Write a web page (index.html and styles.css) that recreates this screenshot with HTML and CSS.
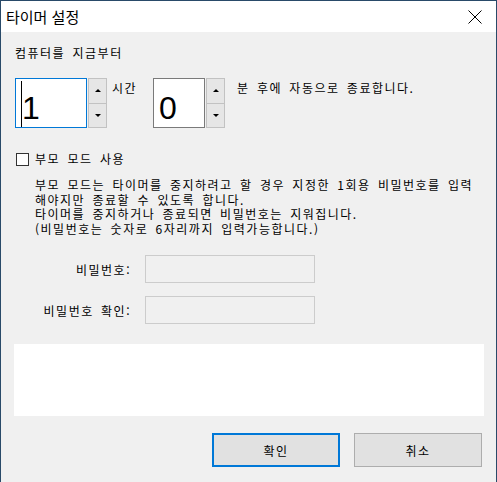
FILE: index.html
```html
<!DOCTYPE html>
<html lang="ko">
<head>
  <meta charset="UTF-8">
  <meta name="viewport" content="width=device-width, initial-scale=1.0">
  <title>타이머 설정</title>
  <link rel="stylesheet" href="styles.css">
</head>
<body>

  <div class="window">
    <div class="titlebar">
      <span class="title">타이머 설정</span>
      <span class="close">
        <svg width="14" height="14" viewBox="0 0 14 14">
          <path d="M0.5 0.5 L13.5 13.5 M13.5 0.5 L0.5 13.5" stroke="#000" stroke-width="1" fill="none"/>
        </svg>
      </span>
    </div>

    <div class="body">
      <div class="lead">컴퓨터를 지금부터</div>

      <div class="timer-row">
        <div class="num-box focused">
          <span class="caret"></span>
          <span class="num">1</span>
        </div>
        <div class="spin">
          <div class="spin-btn"><span class="arrow up"></span></div>
          <div class="spin-btn"><span class="arrow down"></span></div>
        </div>
        <span class="unit">시간</span>
        <div class="num-box minutes">
          <span class="num">0</span>
        </div>
        <div class="spin">
          <div class="spin-btn"><span class="arrow up"></span></div>
          <div class="spin-btn"><span class="arrow down"></span></div>
        </div>
        <span class="tail">분 후에 자동으로 종료합니다.</span>
      </div>

      <label class="check-row">
        <span class="checkbox"></span>
        부모 모드 사용
      </label>

      <p class="note">
        부모 모드는 타이머를 중지하려고 할 경우 지정한 1회용 비밀번호를 입력<br>
        해야지만 종료할 수 있도록 합니다.<br>
        타이머를 중지하거나 종료되면 비밀번호는 지워집니다.<br>
        (비밀번호는 숫자로 6자리까지 입력가능합니다.)
      </p>

      <div class="pw-row">
        <span class="pw-label">비밀번호:</span>
        <span class="pw-input"></span>
      </div>
      <div class="pw-row second">
        <span class="pw-label">비밀번호 확인:</span>
        <span class="pw-input"></span>
      </div>

      <div class="panel"></div>

      <div class="buttons">
        <button class="btn default">확인</button>
        <button class="btn">취소</button>
      </div>
    </div>
  </div>

</body>
</html>
```

FILE: styles.css
```css
* {
  margin: 0;
  padding: 0;
  box-sizing: border-box;
}

body {
  font-family: "Noto Sans CJK KR", "Noto Sans", sans-serif;
  font-size: 12px;
  letter-spacing: 1.5px;
  word-spacing: 2.5px;
  color: #000;
  background: #f0f0f0;
}

.window {
  width: 497px;
  height: 482px;
  border: 1px solid #294a69;
  border-bottom: none;
  display: flex;
  flex-direction: column;
}

.titlebar {
  height: 31px;
  background: #fff;
  display: flex;
  justify-content: space-between;
  align-items: center;
  padding-left: 5px;
}

.title {
  font-size: 15px;
  letter-spacing: 0;
  word-spacing: 0;
}

.close {
  width: 14px;
  height: 14px;
  margin-right: 14px;
  display: flex;
}

.body {
  flex-grow: 1;
  background: #f0f0f0;
  padding: 0 14px;
  display: flex;
  flex-direction: column;
}

.lead {
  line-height: 16px;
  margin-top: 13px;
}

/* hours / minutes */
.timer-row {
  display: flex;
  align-items: flex-start;
  margin-top: 17px;
  height: 50px;
}

.num-box {
  height: 50px;
  background: #fff;
  border: 1px solid #7a7a7a;
  padding-left: 5px;
  display: flex;
}

.num-box.focused {
  width: 72px;
  border-color: #0078d7;
}

.num-box.minutes {
  width: 52px;
}

.caret {
  width: 1px;
  background: #000;
  margin: 2px 0 0;
}

.num {
  font-family: "Liberation Sans", Arial, sans-serif;
  font-size: 32px;
  letter-spacing: 0;
  line-height: 38px;
  padding-top: 10px;
}

.spin {
  width: 19px;
  height: 50px;
  margin-left: 1px;
  display: flex;
  flex-direction: column;
}

.spin-btn {
  flex: 1;
  background: #e6e6e6;
  border: 1px solid #c2c2c2;
  display: flex;
  align-items: center;
  justify-content: center;
}

.spin-btn + .spin-btn {
  margin-top: -1px;
}

.arrow {
  width: 0;
  height: 0;
  border-left: 3px solid transparent;
  border-right: 3px solid transparent;
}

.arrow.up {
  border-bottom: 3px solid #000;
}

.arrow.down {
  border-top: 3px solid #000;
}

.unit {
  width: 46px;
  padding-left: 5px;
  line-height: 16px;
  margin-top: 2px;
}

.tail {
  line-height: 16px;
  margin-top: 2px;
  margin-left: 12px;
  white-space: nowrap;
}

/* parent mode */
.check-row {
  display: flex;
  align-items: center;
  line-height: 16px;
  margin-top: 23px;
}

.checkbox {
  width: 13px;
  height: 13px;
  background: #fff;
  border: 1px solid #333;
  margin: 0 6px 0 1px;
}

.note {
  line-height: 14.6px;
  margin-top: 11px;
  padding-left: 20px;
  white-space: nowrap;
}

.pw-row {
  display: flex;
  align-items: center;
  height: 28px;
  margin-top: 19px;
}

.pw-row.second {
  margin-top: 13px;
}

.pw-label {
  width: 116px;
  margin-right: 14px;
  text-align: right;
  white-space: nowrap;
}

.pw-input {
  width: 170px;
  height: 28px;
  border: 1px solid #cccccc;
  background: #f0f0f0;
}

.panel {
  width: 470px;
  height: 72px;
  margin: 20px 0 0 -1px;
  background: #fff;
}

.buttons {
  display: flex;
  justify-content: flex-end;
  gap: 14px;
  margin-top: 17px;
}

.buttons .btn {
  width: 128px;
  height: 34px;
  font-family: inherit;
  font-size: 12px;
  letter-spacing: 1.5px;
  color: #000;
  background: #e1e1e1;
  border: 1px solid #adadad;
}

.buttons .btn.default {
  border: 2px solid #0078d7;
}
```
